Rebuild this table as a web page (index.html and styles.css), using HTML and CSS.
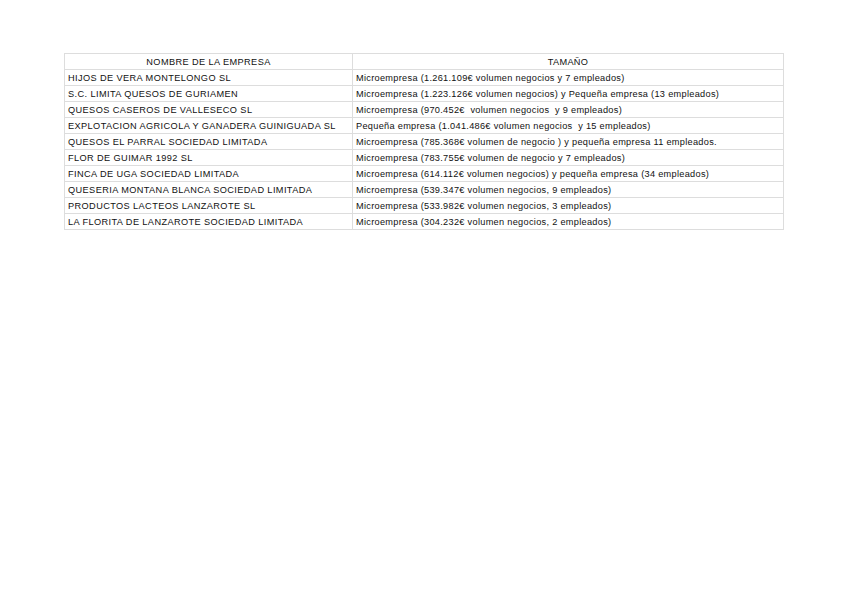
FILE: index.html
```html
<!DOCTYPE html>
<html lang="es">
<head>
<meta charset="utf-8">
<link rel="stylesheet" href="styles.css">
</head>
<body>
<table class="sheet">
  <tr class="head"><td class="c1">NOMBRE DE LA EMPRESA</td><td class="c2">TAMAÑO</td></tr>
  <tr><td class="c1">HIJOS DE VERA MONTELONGO SL</td><td class="c2">Microempresa (1.261.109€ volumen negocios y 7 empleados)</td></tr>
  <tr><td class="c1">S.C. LIMITA QUESOS DE GURIAMEN</td><td class="c2">Microempresa (1.223.126€ volumen negocios) y Pequeña empresa (13 empleados)</td></tr>
  <tr><td class="c1">QUESOS CASEROS DE VALLESECO SL</td><td class="c2">Microempresa (970.452€&nbsp; volumen negocios&nbsp; y 9 empleados)</td></tr>
  <tr><td class="c1">EXPLOTACION AGRICOLA Y GANADERA GUINIGUADA SL</td><td class="c2">Pequeña empresa (1.041.486€ volumen negocios&nbsp; y 15 empleados)</td></tr>
  <tr><td class="c1">QUESOS EL PARRAL SOCIEDAD LIMITADA</td><td class="c2">Microempresa (785.368€ volumen de negocio ) y pequeña empresa 11 empleados.</td></tr>
  <tr><td class="c1">FLOR DE GUIMAR 1992 SL</td><td class="c2">Microempresa (783.755€ volumen de negocio y 7 empleados)</td></tr>
  <tr><td class="c1">FINCA DE UGA SOCIEDAD LIMITADA</td><td class="c2">Microempresa (614.112€ volumen negocios) y pequeña empresa (34 empleados)</td></tr>
  <tr><td class="c1">QUESERIA MONTANA BLANCA SOCIEDAD LIMITADA</td><td class="c2">Microempresa (539.347€ volumen negocios, 9 empleados)</td></tr>
  <tr><td class="c1">PRODUCTOS LACTEOS LANZAROTE SL</td><td class="c2">Microempresa (533.982€ volumen negocios, 3 empleados)</td></tr>
  <tr><td class="c1">LA FLORITA DE LANZAROTE SOCIEDAD LIMITADA</td><td class="c2">Microempresa (304.232€ volumen negocios, 2 empleados)</td></tr>
</table>
</body>
</html>
```
FILE: styles.css
```css
html, body {
  margin: 0;
  padding: 0;
  background: #ffffff;
}
body {
  padding: 53px 0 0 64px;
  font-family: "Liberation Sans", Arial, sans-serif;
  color: #111111;
}
.sheet {
  border-collapse: collapse;
  table-layout: fixed;
  width: 718px;
}
.sheet td {
  border: 1px solid #dddddd;
  height: 15px;
  padding: 0 3px;
  font-size: 9.2px;
  line-height: 14px;
  white-space: nowrap;
  overflow: hidden;
  vertical-align: middle;
}
.sheet .c1 {
  width: 281px;
  letter-spacing: 0.4px;
}
.sheet .c2 {
  width: 424px;
  letter-spacing: 0.3px;
}
.sheet .head td {
  text-align: center;
}
```
